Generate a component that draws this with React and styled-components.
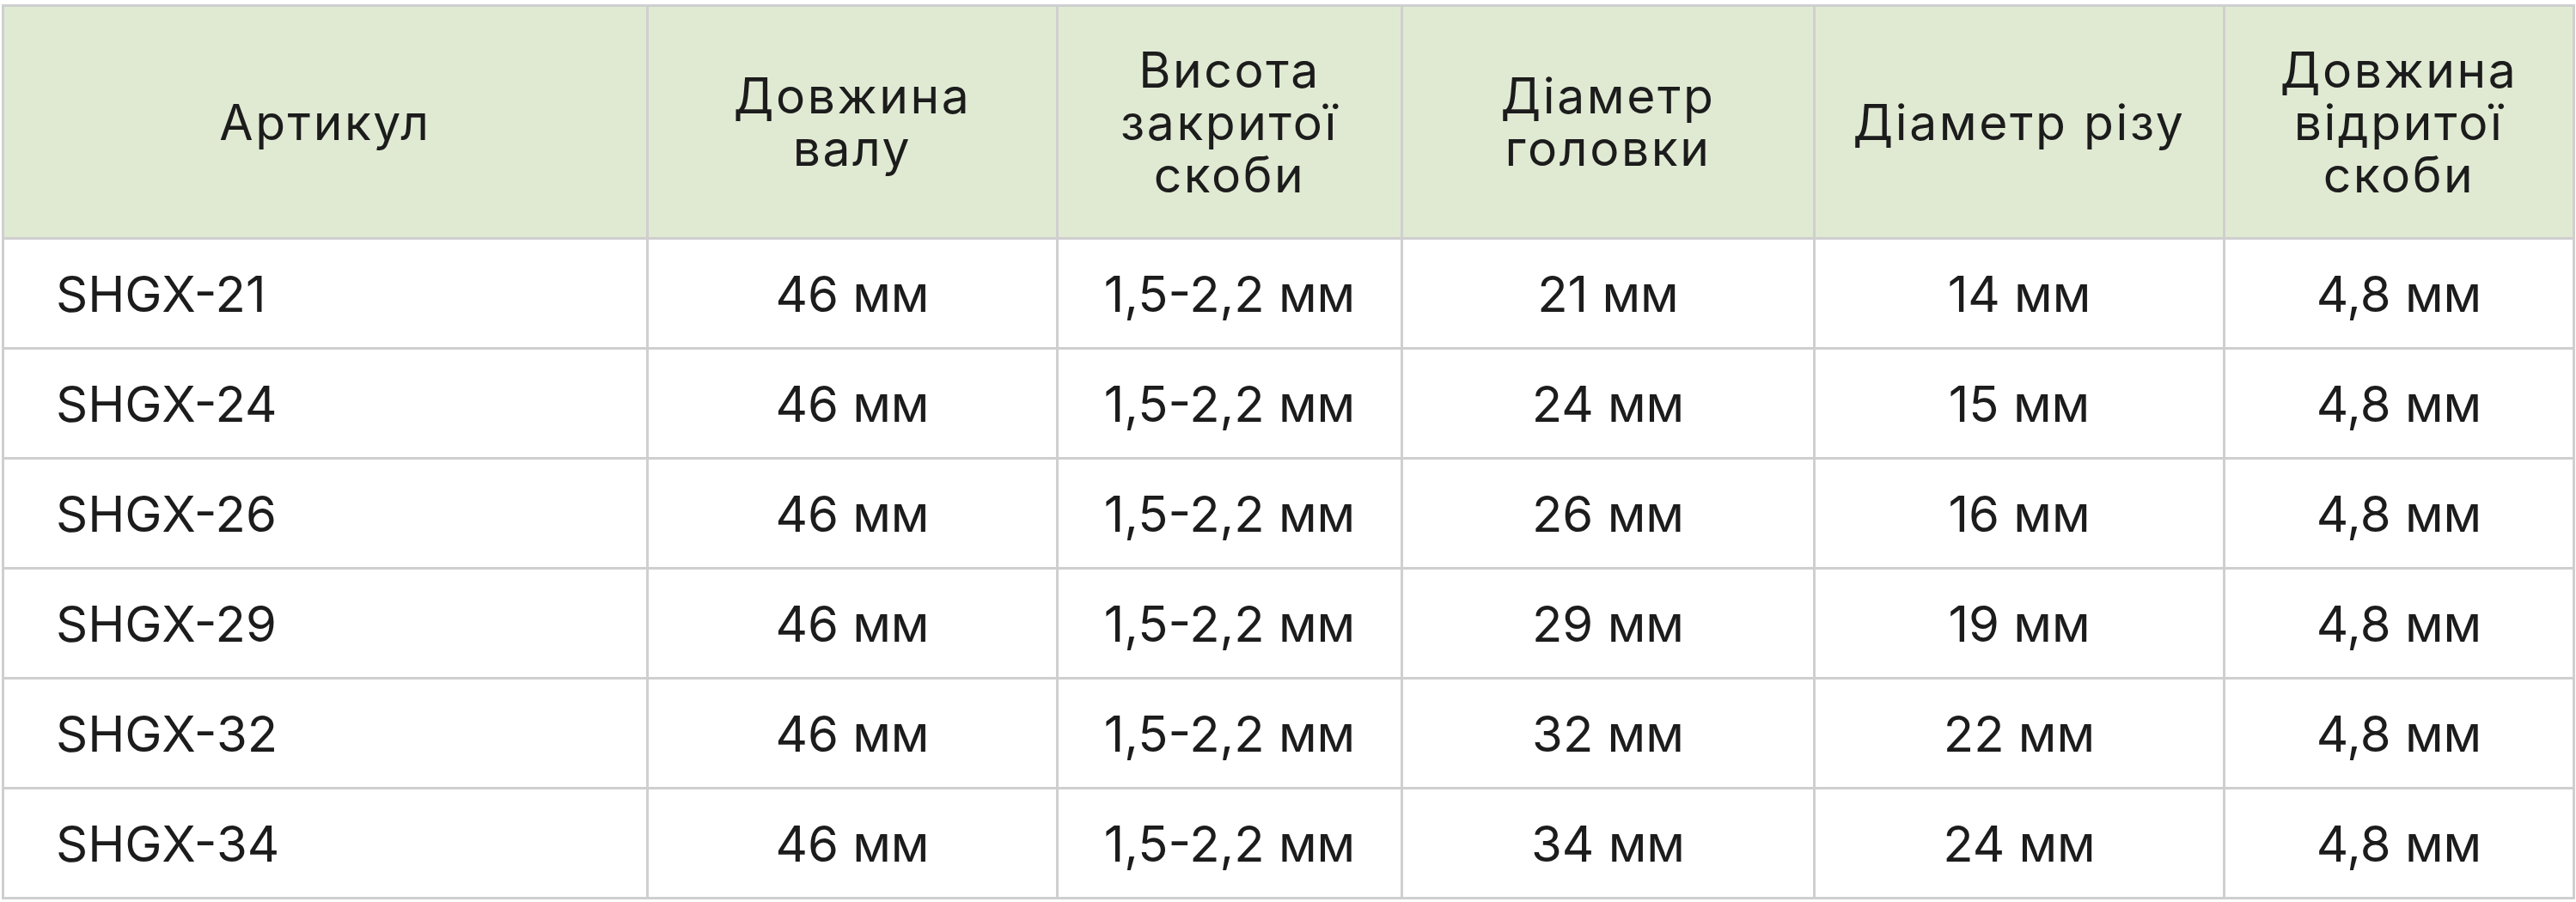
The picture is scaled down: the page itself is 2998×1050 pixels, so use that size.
import React from 'react'
import styled, { createGlobalStyle } from 'styled-components'

const GlobalStyle = createGlobalStyle`
  html, body {
    margin: 0;
    padding: 0;
    background: #ffffff;
  }
  body {
    font-family: Inter, "Noto Sans", "DejaVu Sans", sans-serif;
    color: #1c1c1c;
  }
`

const Wrapper = styled.div`
  padding: 5px 0 0 2px;
`

const Table = styled.table`
  border-collapse: collapse;
  table-layout: fixed;
  width: 2995px;
`

const HeadCell = styled.th`
  background: #e0ead3;
  border: 3px solid #cfcfcf;
  height: 268px;
  padding: 0 16px;
  font-size: 57px;
  line-height: 61px;
  font-weight: 400;
  letter-spacing: 0.045em;
  text-align: center;
  vertical-align: middle;
`

const Cell = styled.td`
  border: 3px solid #cfcfcf;
  height: 125px;
  padding: 0;
  padding-left: ${(p) => (p.$left ? '60px' : '0')};
  font-size: 58px;
  line-height: 62px;
  text-align: ${(p) => (p.$left ? 'left' : 'center')};
  vertical-align: middle;
`

const widths = [750, 477, 401, 480, 477, 407]

const headers = [
  ['Артикул'],
  ['Довжина', 'валу'],
  ['Висота', 'закритої', 'скоби'],
  ['Діаметр', 'головки'],
  ['Діаметр різу'],
  ['Довжина', 'відритої', 'скоби'],
]

const rows = [
  ['SHGX-21', '46 мм', '1,5-2,2 мм', '21 мм', '14 мм', '4,8 мм'],
  ['SHGX-24', '46 мм', '1,5-2,2 мм', '24 мм', '15 мм', '4,8 мм'],
  ['SHGX-26', '46 мм', '1,5-2,2 мм', '26 мм', '16 мм', '4,8 мм'],
  ['SHGX-29', '46 мм', '1,5-2,2 мм', '29 мм', '19 мм', '4,8 мм'],
  ['SHGX-32', '46 мм', '1,5-2,2 мм', '32 мм', '22 мм', '4,8 мм'],
  ['SHGX-34', '46 мм', '1,5-2,2 мм', '34 мм', '24 мм', '4,8 мм'],
]

export default function App() {
  return (
    <Wrapper>
      <GlobalStyle />
      <Table>
        <colgroup>
          {widths.map((w, i) => (
            <col key={i} style={{ width: w }} />
          ))}
        </colgroup>
        <thead>
          <tr>
            {headers.map((lines, i) => (
              <HeadCell key={i}>
                {lines.map((l, j) => (
                  <React.Fragment key={j}>
                    {j > 0 && <br />}
                    {l}
                  </React.Fragment>
                ))}
              </HeadCell>
            ))}
          </tr>
        </thead>
        <tbody>
          {rows.map((r, i) => (
            <tr key={i}>
              {r.map((v, j) => (
                <Cell key={j} $left={j === 0}>
                  {v}
                </Cell>
              ))}
            </tr>
          ))}
        </tbody>
      </Table>
    </Wrapper>
  )
}
